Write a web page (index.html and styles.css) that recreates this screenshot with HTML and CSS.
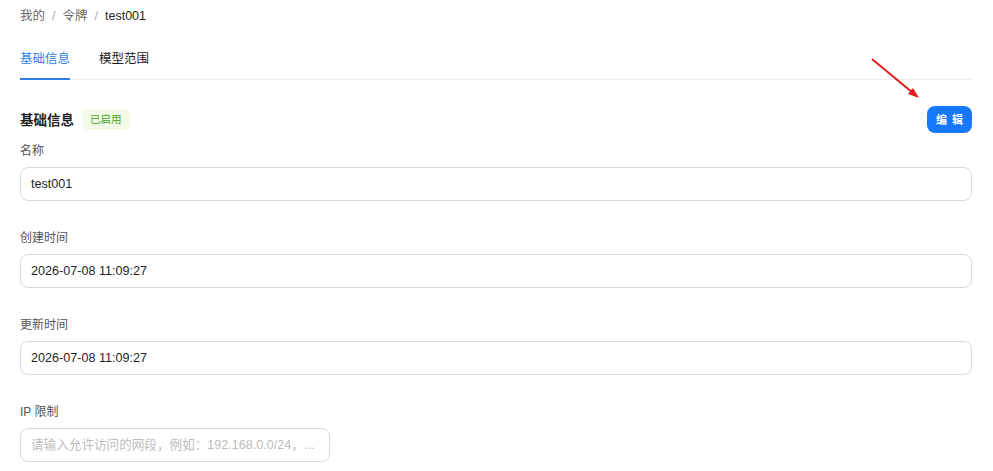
FILE: index.html
```html
<!DOCTYPE html>
<html>
<head>
    <meta charset="utf-8" />
    <title>令牌详情</title>
    <link rel="stylesheet" href="styles.css">
</head>
<body>
    <div class="page">
        <div class="breadcrumb">
            <span class="crumb">我的</span>
            <span class="sep">/</span>
            <span class="crumb">令牌</span>
            <span class="sep">/</span>
            <span class="crumb last">test001</span>
        </div>

        <div class="tabs">
            <div class="tab active">基础信息</div>
            <div class="tab">模型范围</div>
        </div>

        <div class="section-head">
            <div class="title-wrap">
                <span class="section-title">基础信息</span>
                <span class="tag">已启用</span>
            </div>
            <button class="btn-edit">编 辑</button>
            <svg class="arrow" width="60" height="50" viewBox="0 0 60 50">
                <line x1="3" y1="2" x2="44" y2="36" stroke="#e11d1d" stroke-width="2" />
                <polygon points="50,41 39,37 44,31" fill="#e11d1d" />
            </svg>
        </div>

        <div class="form-item">
            <div class="label">名称</div>
            <div class="input">test001</div>
        </div>
        <div class="form-item">
            <div class="label">创建时间</div>
            <div class="input">2026-07-08 11:09:27</div>
        </div>
        <div class="form-item">
            <div class="label">更新时间</div>
            <div class="input">2026-07-08 11:09:27</div>
        </div>
        <div class="form-item">
            <div class="label">IP 限制</div>
            <div class="input small placeholder">请输入允许访问的网段，例如：192.168.0.0/24，...</div>
        </div>
    </div>
</body>
</html>
```

FILE: styles.css
```css
body {
    margin: 0;
    background-color: #fff;
    font-family: "Liberation Sans", "Noto Sans CJK SC", sans-serif;
    color: #1f1f1f;
}

.page {
    padding: 7px 21px 0 20px;
}

.breadcrumb {
    font-size: 12.5px;
    line-height: 18px;
    color: #666;
    display: flex;
    gap: 7px;
}

.breadcrumb .sep {
    color: #aaa;
}

.breadcrumb .last {
    color: #1f1f1f;
}

.tabs {
    display: flex;
    gap: 29px;
    margin-top: 21px;
    border-bottom: 1px solid #eee;
}

.tab {
    font-size: 12.5px;
    line-height: 20px;
    padding: 3px 0 9px;
    color: #222;
    border-bottom: 2px solid transparent;
    margin-bottom: -1px;
}

.tab.active {
    color: #2f7ee5;
    border-bottom-color: #2f7ee5;
}

.section-head {
    position: relative;
    display: flex;
    align-items: center;
    justify-content: space-between;
    margin-top: 25px;
    height: 28px;
}

.title-wrap {
    display: flex;
    align-items: center;
    gap: 8px;
}

.section-title {
    font-size: 13.5px;
    font-weight: bold;
    color: #1f1f1f;
}

.tag {
    font-size: 10.5px;
    line-height: 21px;
    padding: 0 8px;
    background-color: #f1fbe8;
    color: #4aa21c;
    border-radius: 6px;
}

.btn-edit {
    border: none;
    background-color: #1677ff;
    color: #fff;
    font-family: inherit;
    font-size: 11px;
    font-weight: bold;
    letter-spacing: 1px;
    height: 27px;
    padding: 0 8px 0 9px;
    border-radius: 8px;
}

.arrow {
    position: absolute;
    right: 43px;
    top: -48px;
}

.form-item {
    margin-bottom: 27px;
}

.section-head + .form-item {
    margin-top: 8px;
}

.label {
    font-size: 12px;
    line-height: 21px;
    color: #555;
    padding-bottom: 5px;
}

.input {
    box-sizing: border-box;
    height: 34px;
    line-height: 32px;
    border: 1px solid #d9d9d9;
    border-radius: 8px;
    padding: 0 10px;
    font-size: 12.6px;
    color: #1f1f1f;
}

.input.small {
    width: 310px;
    white-space: nowrap;
    overflow: hidden;
}

.input.placeholder {
    color: #bdbdbd;
}
```
